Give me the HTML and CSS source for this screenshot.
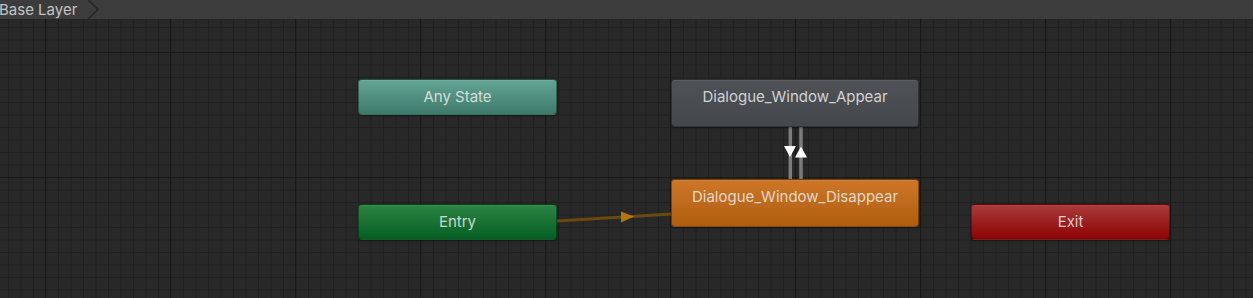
FILE: index.html
```html
<!DOCTYPE html>
<html>
<head>
<meta charset="utf-8">
<link rel="stylesheet" href="styles.css">
</head>
<body>
<div class="app">
  <div class="toolbar">
    <span class="crumb">Base Layer</span>
    <svg class="chev" width="14" height="19" viewBox="0 0 14 19"><polyline points="1,0 11,9.5 1,19" fill="none" stroke="#262626" stroke-width="1.5"/></svg>
  </div>
  <div class="canvas">
    <svg class="links" width="1253" height="279" viewBox="0 19 1253 279">
      <line x1="557" y1="221" x2="672" y2="214" stroke="#6a4a0e" stroke-width="3"/>
      <polygon points="621,211.5 621,222.5 634,216.5" fill="#b3760d"/>
      <line x1="790.3" y1="127" x2="790.3" y2="180" stroke="#7c7c7c" stroke-width="3.5"/>
      <line x1="801" y1="127" x2="801" y2="180" stroke="#7c7c7c" stroke-width="3.5"/>
      <polygon points="784,146 796,146 790,157" fill="#ffffff"/>
      <polygon points="795,157.5 807,157.5 801,146.5" fill="#ffffff"/>
    </svg>
    <div class="node any">Any State</div>
    <div class="node appear tall">Dialogue_Window_Appear</div>
    <div class="node disappear tall">Dialogue_Window_Disappear</div>
    <div class="node entry">Entry</div>
    <div class="node exit">Exit</div>
  </div>
</div>
</body>
</html>
```
FILE: styles.css
```css
html, body {
  margin: 0;
  padding: 0;
  background: #282828;
}
.app {
  width: 1253px;
  height: 298px;
  overflow: hidden;
  display: flex;
  flex-direction: column;
  font-family: Inter, "Noto Sans", sans-serif;
}
.toolbar {
  height: 19px;
  flex: 0 0 19px;
  background: #3c3c3c;
  display: flex;
  align-items: center;
  position: relative;
}
.crumb {
  color: #c4c4c4;
  font-size: 15px;
  margin-left: -1px;
  line-height: 19px;
}
.chev {
  margin-left: 10px;
}
.canvas {
  flex: 1;
  position: relative;
  background-color: #282828;
  background-image:
    linear-gradient(to right, #191919 1px, transparent 1px),
    linear-gradient(to bottom, #191919 1px, transparent 1px),
    linear-gradient(to right, #202020 1px, transparent 1px),
    linear-gradient(to bottom, #202020 1px, transparent 1px);
  background-size: 125px 125px, 125px 125px, 12.5px 12.5px, 12.5px 12.5px;
  background-position: 45px 0, 0 33px, 8px 0, 0 8px;
}
.links {
  position: absolute;
  left: 0;
  top: 0;
}
.node {
  position: absolute;
  box-sizing: border-box;
  height: 36px;
  border-radius: 4px;
  color: rgba(235, 235, 235, 0.85);
  font-size: 15px;
  text-align: center;
  line-height: 33px;
  border: 1px solid rgba(0, 0, 0, 0.35);
  box-shadow: 0 1px 2px rgba(0, 0, 0, 0.4), inset 0 1px 0 rgba(255,255,255,0.08);
}
.tall {
  height: 48px;
}
.any {
  left: 358px;
  top: 60px;
  width: 199px;
  background: linear-gradient(#63a594, #3e7a6b);
}
.appear {
  left: 671px;
  top: 60px;
  width: 248px;
  background: linear-gradient(#4e5156, #44474b);
}
.disappear {
  left: 671px;
  top: 160px;
  width: 248px;
  background: linear-gradient(#cd7628, #b05d0e);
}
.entry {
  left: 358px;
  top: 185px;
  width: 199px;
  background: linear-gradient(#2c8443, #055f24);
}
.exit {
  left: 971px;
  top: 185px;
  width: 199px;
  background: linear-gradient(#a93a3a, #8e0303);
}
```
